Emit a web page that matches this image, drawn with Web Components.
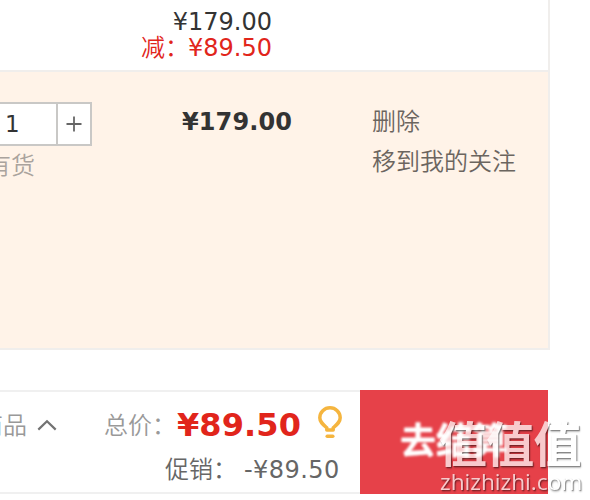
<!DOCTYPE html>
<html lang="zh-CN">
<head>
<meta charset="utf-8">
<title>购物车</title>
<style>
	body {
		margin: 0;
		width: 590px;
		height: 500px;
		overflow: hidden;
		background: #fff;
		font: 350 24px/26px "DejaVu Sans", "Noto Sans CJK SC DemiLight", "Noto Sans CJK SC", sans-serif;
		color: #333;
	}
</style>
</head>
<body>
<cart-page></cart-page>
<script>
class CartPrice extends HTMLElement {
	constructor() {
		super();
		this.attachShadow({mode: 'open'});
		this.shadowRoot.innerHTML = `
			<style>
			:host { display: block; white-space: nowrap; font-weight: 400; }
			:host([strong]) { font-weight: bold; letter-spacing: .1px; }
			:host([total]) { font-size: 32px; font-weight: bold; color: #e1251b; letter-spacing: .1px; }
			</style>
			<slot></slot>`;
	}
}

class CartStepper extends HTMLElement {
	constructor() {
		super();
		this.attachShadow({mode: 'open'});
		this.shadowRoot.innerHTML = `
			<style>
			:host {
				display: flex;
				box-sizing: border-box;
				width: 92px;
				height: 44px;
				border: 2px solid #c9c8c6;
				border-left: 0;
				background: #fff;
			}
			.value { width: 51px; padding-left: 5px; line-height: 41px; font-size: 23px; font-weight: 400; }
			.plus {
				flex: 1;
				display: flex;
				align-items: center;
				justify-content: center;
				border-left: 2px solid #c9c8c6;
			}
			</style>
			<div class="value"><slot></slot></div>
			<div class="plus">
				<svg width="16" height="16" viewBox="0 0 16 16" stroke="#666" stroke-width="1.8"><path d="M8 .5v15M.5 8h15"/></svg>
			</div>`;
	}
}

class CartItem extends HTMLElement {
	constructor() {
		super();
		this.attachShadow({mode: 'open'});
		this.shadowRoot.innerHTML = `
			<style>
			:host {
				display: grid;
				grid-template-columns: 182px 190px 1fr;
				box-sizing: border-box;
				height: 280px;
				padding-top: 30px;
				background: #fff3e8;
				border: 2px solid #f0eeec;
				border-width: 2px 0 2px 0;
			}
			.stock { padding-top: 5px; line-height: 30px; color: #aaa39d; margin-left: -13px; }
			.price { padding-top: 7px; }
			.actions { line-height: 40px; color: #6b655f; }
			.actions div { height: 40px; }
			</style>
			<div>
				<cart-stepper>1</cart-stepper>
				<div class="stock">有货</div>
			</div>
			<div class="price"><cart-price strong>¥179.00</cart-price></div>
			<div class="actions">
				<div>删除</div>
				<div>移到我的关注</div>
			</div>`;
	}
}

class CartFooter extends HTMLElement {
	constructor() {
		super();
		this.attachShadow({mode: 'open'});
		this.shadowRoot.innerHTML = `
			<style>
			:host { display: flex; height: 104px; }
			.info {
				box-sizing: border-box;
				width: 360px;
				border: 2px solid #f0f0f0;
				border-width: 2px 0;
				overflow: hidden;
			}
			.line { display: flex; align-items: center; }
			.first { height: 64px; padding-top: 1px; color: #999; }
			.picked { width: 48px; margin-left: -21px; padding-top: 2px; }
			.arrow { margin-left: 10px; }
			.label { width: 73px; margin-left: 47px; padding-top: 2px; }
			.bulb { margin: -6px 0 0 16px; }
			.second { height: 26px; padding-left: 165px; color: #666; }
			.second .promo { width: 79px; }
			.second cart-price { letter-spacing: .45px; }
			.pay {
				width: 188px;
				background: #e64149;
				color: #fff;
				font: bold 36px/97px "Noto Sans CJK SC", sans-serif;
				text-align: center;
				text-shadow: 0 0 2px #fffa;
			}
			.pay span { filter: blur(.8px); }
			</style>
			<div class="info">
				<div class="line first">
					<div class="picked">商品</div>
					<svg class="arrow" width="20" height="14" viewBox="0 0 20 14" fill="none" stroke="#737373" stroke-width="2.2"><path d="M1.3 11.6 10 3.3l8.7 8.3"/></svg>
					<div class="label">总价：</div>
					<cart-price total>¥89.50</cart-price>
					<svg class="bulb" width="26" height="34" viewBox="0 0 26 34" fill="none" stroke="#f5b53f" stroke-width="3.5" stroke-linejoin="round"><path d="M9.8 25v-2.2C6 19.500 2.800 17 2.800 12.800a10.200 10 0 0 1 20.400 0c0 4.200-3.200 6.700-7 10V25z"/><path d="M10.200 31.200h5.600" stroke-linecap="round"/></svg>
				</div>
				<div class="line second">
					<div class="promo">促销：</div>
					<cart-price>-¥89.50</cart-price>
				</div>
			</div>
			<div class="pay"><span><slot></slot></span></div>`;
	}
}

class SiteWatermark extends HTMLElement {
	constructor() {
		super();
		this.attachShadow({mode: 'open'});
		this.shadowRoot.innerHTML = `
			<style>
			:host {
				position: absolute;
				left: 439px;
				top: 414px;
				width: 148px;
				color: #fff;
				opacity: .72;
				text-shadow: 1px 1px 1px #0008, 1px 2px 2px #0005;
				white-space: nowrap;
			}
			.name { font: bold 48px/54px "Noto Sans CJK SC", sans-serif; letter-spacing: -.7px; }
			.site { padding-left: 1px; font: 22.7px/27px "Open Sans", sans-serif; }
			</style>
			<div class="name"><slot></slot></div>
			<div class="site"><slot name="site"></slot></div>`;
	}
}

class CartPage extends HTMLElement {
	constructor() {
		super();
		this.attachShadow({mode: 'open'});
		this.shadowRoot.innerHTML = `
			<style>
			:host { display: block; }
			.list { width: 548px; border-right: 2px solid #f0eeec; }
			.sum {
				box-sizing: border-box;
				width: 272px;
				height: 70px;
				padding-top: 9px;
				text-align: right;
			}
			.cut { display: flex; justify-content: flex-end; color: #e1251b; }
			.cut div { width: 49px; margin-right: -1px; }
			cart-footer { margin-top: 40px; }
			</style>
			<div class="list">
				<div class="sum">
					<cart-price>¥179.00</cart-price>
					<div class="cut"><div>减：</div><cart-price>¥89.50</cart-price></div>
				</div>
				<cart-item></cart-item>
			</div>
			<cart-footer>去结算</cart-footer>
			<site-watermark>值值值<span slot="site">zhizhizhi.com</span></site-watermark>`;
	}
}

customElements.define('cart-price', CartPrice);
customElements.define('cart-stepper', CartStepper);
customElements.define('cart-item', CartItem);
customElements.define('cart-footer', CartFooter);
customElements.define('site-watermark', SiteWatermark);
customElements.define('cart-page', CartPage);
</script>
</body>
</html>
